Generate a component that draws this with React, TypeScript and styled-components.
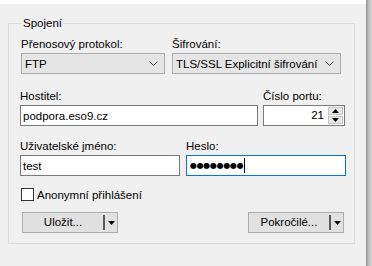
import styled, { createGlobalStyle } from "styled-components";

const Global = createGlobalStyle`
  html, body {
    margin: 0;
    padding: 0;
    background: #f0f0f0;
  }
  body {
    font-family: "Liberation Sans", Arial, sans-serif;
    font-size: 11.5px;
    color: #000;
  }
`;

const Window = styled.div`
  display: flex;
  width: 372px;
  height: 266px;
  overflow: hidden;
`;

const Main = styled.div`
  flex: 1;
  border-top: 4px solid #ffffff;
  padding: 12px 0 0 8px;
  box-sizing: border-box;
`;

const SideBar = styled.div`
  width: 6px;
  background: linear-gradient(to right, #8e8e8e 0, #9f9f9f 1px, #b9b9b9 2px, #d6d6d6 6px);
`;

const Group = styled.fieldset`
  width: 347px;
  box-sizing: border-box;
  margin: 0;
  padding: 6px 0 10px 11px;
  border: 1px solid #dcdcdc;
  min-inline-size: 0;
`;

const Legend = styled.legend`
  padding: 0 1px;
  margin-left: 2px;
  line-height: 15px;
`;

const Row = styled.div<{ $gap: number; $top?: number }>`
  display: flex;
  gap: ${(p) => p.$gap}px;
  margin-top: ${(p) => p.$top ?? 0}px;
`;

const Col = styled.div<{ $w: number; $shift?: number }>`
  display: flex;
  flex-direction: column;
  width: ${(p) => p.$w}px;
  margin-left: ${(p) => p.$shift ?? 0}px;
`;

const Label = styled.div`
  line-height: 15px;
  height: 15px;
  margin-bottom: 1px;
  white-space: nowrap;
`;

const Combo = styled.div`
  display: flex;
  align-items: center;
  height: 21px;
  box-sizing: border-box;
  border: 1px solid #adadad;
  background: #e5e5e5;
  padding: 0 6px 0 3px;
  white-space: nowrap;
`;

const ComboText = styled.span`
  flex: 1;
`;

const Field = styled.div<{ $focus?: boolean; $align?: string }>`
  display: flex;
  align-items: center;
  justify-content: ${(p) => p.$align ?? "flex-start"};
  height: 21px;
  box-sizing: border-box;
  border: 1px solid ${(p) => (p.$focus ? "#0078d7" : "#7a7a7a")};
  background: #ffffff;
  padding: 0 2px;
  white-space: nowrap;
`;

const Dots = styled.span`
  font-family: "DejaVu Sans", sans-serif;
  font-size: 8px;
  letter-spacing: -0.3px;
  margin-left: 1px;
`;

const Caret = styled.span`
  display: inline-block;
  width: 1px;
  height: 15px;
  background: #000;
  margin-left: 1px;
`;

const Spin = styled.div`
  display: flex;
  align-items: stretch;
  height: 21px;
  box-sizing: border-box;
  border: 1px solid #7a7a7a;
  background: #ffffff;
`;

const SpinValue = styled.div`
  flex: 1;
  text-align: right;
  line-height: 19px;
  padding-right: 4px;
`;

const SpinButtons = styled.div`
  display: flex;
  flex-direction: column;
  width: 15px;
  margin: 1px 1px 1px 0;
  gap: 1px;
`;

const SpinBtn = styled.div`
  flex: 1;
  display: flex;
  align-items: center;
  justify-content: center;
  background: #e8e8e8;
  border: 1px solid #c4c4c4;
`;

const CheckRow = styled.div`
  display: flex;
  align-items: center;
  margin: 12px 0 0 1px;
  height: 13px;
`;

const Box = styled.div`
  width: 13px;
  height: 13px;
  box-sizing: border-box;
  border: 1px solid #333333;
  background: #ffffff;
  margin-right: 3px;
`;

const Buttons = styled.div`
  display: flex;
  justify-content: space-between;
  margin: 11px 0 0 2px;
  width: 322px;
`;

const SplitButton = styled.div`
  display: flex;
  width: 96px;
  height: 21px;
  box-sizing: border-box;
  border: 1px solid #adadad;
  background: #e1e1e1;
`;

const SplitMain = styled.div`
  flex: 1;
  text-align: center;
  line-height: 19px;
`;

const SplitDivider = styled.div`
  width: 2px;
  margin: 2px 0;
  background: #5a5a5a;
`;

const SplitArrow = styled.div`
  width: 12px;
  display: flex;
  align-items: center;
  justify-content: center;
`;

const Chevron = () => (
  <svg width="9" height="5" viewBox="0 0 9 5">
    <polyline points="0.5,0.5 4.5,4.5 8.5,0.5" fill="none" stroke="#606060" strokeWidth="1" />
  </svg>
);

const Tri = ({ up }: { up?: boolean }) => (
  <svg width="7" height="4" viewBox="0 0 7 4">
    <polygon points={up ? "0,4 7,4 3.5,0" : "0,0 7,0 3.5,4"} fill="#000" />
  </svg>
);

const Split = ({ label }: { label: string }) => (
  <SplitButton>
    <SplitMain>{label}</SplitMain>
    <SplitDivider />
    <SplitArrow>
      <Tri />
    </SplitArrow>
  </SplitButton>
);

export default function App() {
  return (
    <Window>
      <Global />
      <Main>
        <Group>
          <Legend>Spojení</Legend>
          <Row $gap={7}>
            <Col $w={144} $shift={1}>
              <Label>Přenosový protokol:</Label>
              <Combo>
                <ComboText>FTP</ComboText>
                <Chevron />
              </Combo>
            </Col>
            <Col $w={169}>
              <Label>Šifrování:</Label>
              <Combo>
                <ComboText>TLS/SSL Explicitní šifrování</ComboText>
                <Chevron />
              </Combo>
            </Col>
          </Row>
          <Row $gap={5} $top={15}>
            <Col $w={238}>
              <Label>Hostitel:</Label>
              <Field>podpora.eso9.cz</Field>
            </Col>
            <Col $w={82}>
              <Label>Číslo portu:</Label>
              <Spin>
                <SpinValue>21</SpinValue>
                <SpinButtons>
                  <SpinBtn>
                    <Tri up />
                  </SpinBtn>
                  <SpinBtn>
                    <Tri />
                  </SpinBtn>
                </SpinButtons>
              </Spin>
            </Col>
          </Row>
          <Row $gap={6} $top={13}>
            <Col $w={160}>
              <Label>Uživatelské jméno:</Label>
              <Field>test</Field>
            </Col>
            <Col $w={160}>
              <Label>Heslo:</Label>
              <Field $focus>
                <Dots>●●●●●●●●</Dots>
                <Caret />
              </Field>
            </Col>
          </Row>
          <CheckRow>
            <Box />
            Anonymní přihlášení
          </CheckRow>
          <Buttons>
            <Split label="Uložit..." />
            <Split label="Pokročilé..." />
          </Buttons>
        </Group>
      </Main>
      <SideBar />
    </Window>
  );
}
